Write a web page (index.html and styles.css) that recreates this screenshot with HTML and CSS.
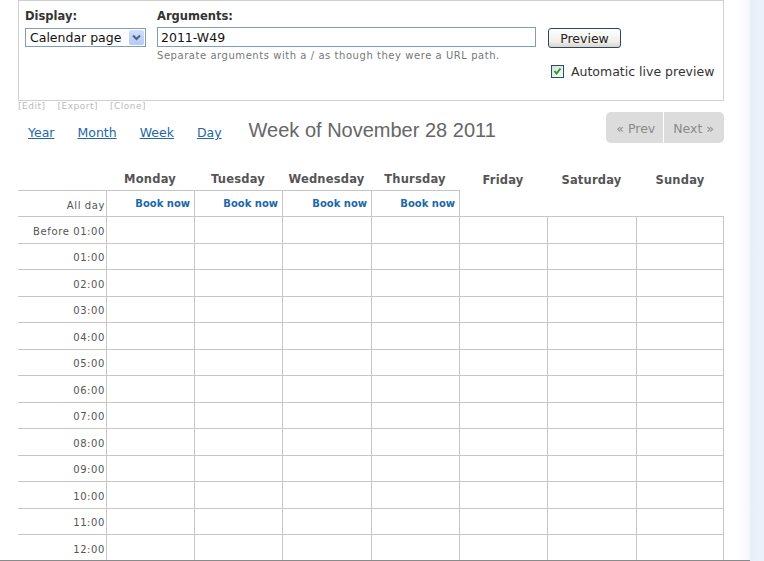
FILE: index.html
```html
<!DOCTYPE html>
<html lang="en">
<head>
<meta charset="utf-8">
<title>Calendar page preview</title>
<link rel="stylesheet" href="styles.css">
</head>
<body>
<div class="page">
  <main class="main">
    <form class="panel">
      <div class="field field-display">
        <label class="field-label">Display:</label>
        <div class="combo">
          <span class="combo-text">Calendar page</span>
          <span class="combo-btn"><svg width="9" height="7" viewBox="0 0 9 7"><polyline points="1,1.5 4.5,5 8,1.5" fill="none" stroke="#4d6185" stroke-width="2"/></svg></span>
        </div>
      </div>
      <div class="field field-args">
        <label class="field-label">Arguments:</label>
        <input class="textbox" type="text" value="2011-W49">
        <p class="hint">Separate arguments with a / as though they were a URL path.</p>
      </div>
      <div class="actions">
        <button class="btn-preview" type="button">Preview</button>
        <label class="check"><span class="checkbox"><svg width="11" height="11" viewBox="0 0 11 11"><polyline points="2.5,5 4.5,7.5 8.5,2.5" fill="none" stroke="#21a121" stroke-width="2"/></svg></span>Automatic live preview</label>
      </div>
    </form>

    <div class="tools"><span>[Edit]</span><span>[Export]</span><span>[Clone]</span></div>

    <div class="nav">
      <div class="nav-links">
        <a href="#">Year</a>
        <a href="#">Month</a>
        <a href="#">Week</a>
        <a href="#">Day</a>
      </div>
      <h1 class="title">Week of November 28 2011</h1>
      <div class="pager"><span class="pg-prev">« Prev</span><span class="pg-next">Next »</span></div>
    </div>

    <div class="cal">
      <div class="hd"></div>
      <div class="hd">Monday</div>
      <div class="hd">Tuesday</div>
      <div class="hd">Wednesday</div>
      <div class="hd">Thursday</div>
      <div class="hd off">Friday</div>
      <div class="hd off">Saturday</div>
      <div class="hd off">Sunday</div>

      <div class="tm">All day</div>
      <div class="ad"><a class="book" href="#">Book now</a></div>
      <div class="ad"><a class="book" href="#">Book now</a></div>
      <div class="ad"><a class="book" href="#">Book now</a></div>
      <div class="ad"><a class="book" href="#">Book now</a></div>
      <div class="ad-edge"></div>
      <div></div>
      <div></div>

      <div class="tm">Before 01:00</div><div class="dy"></div><div class="dy"></div><div class="dy"></div><div class="dy"></div><div class="dy"></div><div class="dy"></div><div class="dy last"></div>
      <div class="tm">01:00</div><div class="dy"></div><div class="dy"></div><div class="dy"></div><div class="dy"></div><div class="dy"></div><div class="dy"></div><div class="dy last"></div>
      <div class="tm">02:00</div><div class="dy"></div><div class="dy"></div><div class="dy"></div><div class="dy"></div><div class="dy"></div><div class="dy"></div><div class="dy last"></div>
      <div class="tm">03:00</div><div class="dy"></div><div class="dy"></div><div class="dy"></div><div class="dy"></div><div class="dy"></div><div class="dy"></div><div class="dy last"></div>
      <div class="tm">04:00</div><div class="dy"></div><div class="dy"></div><div class="dy"></div><div class="dy"></div><div class="dy"></div><div class="dy"></div><div class="dy last"></div>
      <div class="tm">05:00</div><div class="dy"></div><div class="dy"></div><div class="dy"></div><div class="dy"></div><div class="dy"></div><div class="dy"></div><div class="dy last"></div>
      <div class="tm">06:00</div><div class="dy"></div><div class="dy"></div><div class="dy"></div><div class="dy"></div><div class="dy"></div><div class="dy"></div><div class="dy last"></div>
      <div class="tm">07:00</div><div class="dy"></div><div class="dy"></div><div class="dy"></div><div class="dy"></div><div class="dy"></div><div class="dy"></div><div class="dy last"></div>
      <div class="tm">08:00</div><div class="dy"></div><div class="dy"></div><div class="dy"></div><div class="dy"></div><div class="dy"></div><div class="dy"></div><div class="dy last"></div>
      <div class="tm">09:00</div><div class="dy"></div><div class="dy"></div><div class="dy"></div><div class="dy"></div><div class="dy"></div><div class="dy"></div><div class="dy last"></div>
      <div class="tm">10:00</div><div class="dy"></div><div class="dy"></div><div class="dy"></div><div class="dy"></div><div class="dy"></div><div class="dy"></div><div class="dy last"></div>
      <div class="tm">11:00</div><div class="dy"></div><div class="dy"></div><div class="dy"></div><div class="dy"></div><div class="dy"></div><div class="dy"></div><div class="dy last"></div>
      <div class="tm">12:00</div><div class="dy"></div><div class="dy"></div><div class="dy"></div><div class="dy"></div><div class="dy"></div><div class="dy"></div><div class="dy last"></div>
    </div>
  </main>
  <aside class="strip"></aside>
</div>
</body>
</html>
```

FILE: styles.css
```css
html, body {
  margin: 0;
  height: 561px;
  overflow: hidden;
  background: #fff;
}
body {
  font-family: "DejaVu Sans", Verdana, sans-serif;
  font-size: 12.5px;
  color: #333;
}
.page {
  display: flex;
  height: 561px;
}
.main {
  width: 750px;
  flex: none;
  height: 561px;
  box-sizing: border-box;
  border-bottom: 1px solid #8a8a8a;
  overflow: hidden;
  padding-left: 18px;
  background: linear-gradient(to right, #fff 735px, #f4f7fc 750px);
}
.strip {
  flex: 1;
  height: 561px;
  background: linear-gradient(to right, #e6eef9, #ecf2fb);
}

/* top panel */
.panel {
  width: 706px;
  height: 101px;
  box-sizing: border-box;
  border: 1px solid #d0d0d0;
  padding: 8px 0 0 6px;
  margin: 0;
  display: flex;
}
.field-label {
  display: block;
  font-weight: bold;
  font-size: 11.5px;
  line-height: 14px;
  color: #333;
  margin-bottom: 5px;
}
.field-display { width: 132px; }
.combo {
  width: 121px;
  height: 19px;
  box-sizing: border-box;
  border: 1px solid #7f9db9;
  display: flex;
  align-items: center;
  background: #fff;
}
.combo-text {
  flex: 1;
  padding-left: 4px;
  line-height: 17px;
  color: #111;
}
.combo-btn {
  width: 15px;
  height: 15px;
  margin-right: 1px;
  border-radius: 2px;
  background: linear-gradient(#cfdefd, #b3c9f6);
  display: flex;
  align-items: center;
  justify-content: center;
}
.field-args { width: 391px; }
.textbox {
  display: block;
  width: 379px;
  height: 20px;
  box-sizing: border-box;
  border: 1px solid #7f9db9;
  margin: -1px 0 0;
  padding: 0 3px;
  font-family: "DejaVu Sans", Verdana, sans-serif;
  font-size: 12.5px;
  color: #111;
  background: #fff;
  outline: none;
}
.hint {
  margin: 3px 0 0;
  font-size: 10px;
  line-height: 12px;
  letter-spacing: 0.55px;
  color: #777;
}
.actions {
  padding-top: 19px;
  display: flex;
  flex-direction: column;
  align-items: flex-start;
}
.btn-preview {
  appearance: none;
  width: 73px;
  height: 20px;
  box-sizing: border-box;
  border: 1px solid #2b4663;
  border-radius: 3px;
  background: linear-gradient(#ffffff, #f0efea 70%, #d9d4c8);
  font-family: "DejaVu Sans", Verdana, sans-serif;
  font-size: 12.5px;
  line-height: 18px;
  color: #222;
  padding: 1px 0 0;
}
.check {
  margin: 16px 0 0 3px;
  display: flex;
  align-items: center;
  gap: 7px;
  color: #333;
  line-height: 15px;
}
.checkbox {
  width: 13px;
  height: 13px;
  box-sizing: border-box;
  border: 1px solid #1c5180;
  background: linear-gradient(135deg, #dcdcd7, #fbfbfa);
  display: flex;
}

/* tools line */
.tools {
  display: flex;
  gap: 12px;
  font-size: 9px;
  line-height: 11px;
  letter-spacing: 0.5px;
  color: #bbb;
}

/* nav */
.nav {
  display: flex;
  align-items: flex-start;
  width: 706px;
  height: 31px;
}
.nav-links {
  display: flex;
  gap: 23px;
  margin-left: 10px;
  padding-top: 13px;
}
.nav-links a {
  line-height: 15px;
  color: #2467a8;
  text-decoration: underline;
}
.title {
  margin: 0 0 0 27px;
  padding-top: 7px;
  font-family: "Liberation Sans", Arial, sans-serif;
  font-weight: normal;
  font-size: 20px;
  line-height: 23px;
  color: #666;
}
.pager {
  margin-left: auto;
  display: flex;
  gap: 1px;
  height: 31px;
  border-radius: 5px;
  overflow: hidden;
}
.pager span {
  background: #dcdcdc;
  color: #8a8a8a;
  line-height: 26px;
  padding-top: 4px;
}
.pg-prev { padding: 0 8px 0 10px; }
.pg-next { padding: 0 10px 0 9px; }

/* calendar grid */
.cal {
  margin-top: 22px;
  width: 706px;
  display: grid;
  grid-template-columns: 88px 88px 88px 89px 88px 88px 89px 88px;
  grid-template-rows: 25px 26px;
  grid-auto-rows: 26.5px;
}
.cal > div { box-sizing: border-box; }
.hd {
  text-align: center;
  font-weight: bold;
  font-size: 11.5px;
  line-height: 14px;
  letter-spacing: 0.2px;
  color: #555;
  padding-top: 7px;
}
.hd.off { padding-top: 8px; }
.tm {
  border-top: 1px solid #c6c6c6;
  display: flex;
  align-items: center;
  justify-content: flex-end;
  padding: 3px 1px 0 0;
  font-size: 10px;
  letter-spacing: 0.6px;
  color: #555;
}
.dy {
  border-top: 1px solid #c6c6c6;
  border-left: 1px solid #c6c6c6;
}
.dy.last { border-right: 1px solid #c6c6c6; }
.ad {
  border-top: 1px solid #c6c6c6;
  border-left: 1px solid #c6c6c6;
  display: flex;
  align-items: center;
  justify-content: flex-end;
  padding-right: 4px;
}
.ad-edge { border-left: 1px solid #c6c6c6; }
.book {
  font-weight: bold;
  font-size: 10px;
  color: #1b68a8;
  text-decoration: none;
}
```
